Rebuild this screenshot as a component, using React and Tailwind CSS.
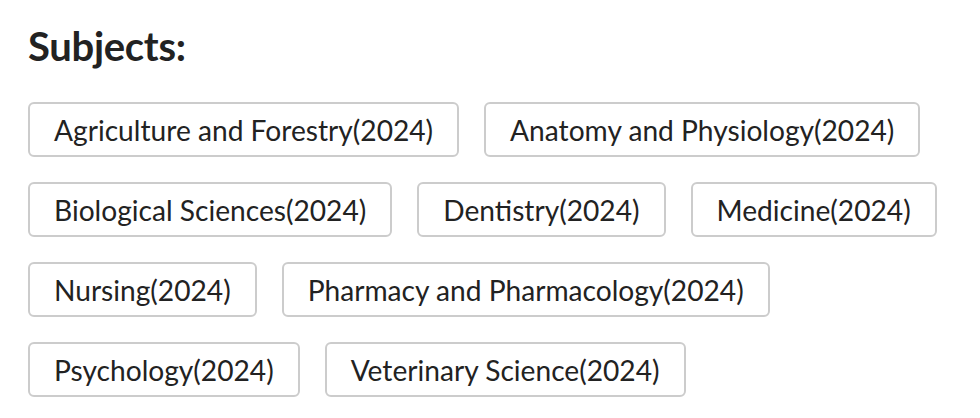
const subjects = [
  'Agriculture and Forestry(2024)',
  'Anatomy and Physiology(2024)',
  'Biological Sciences(2024)',
  'Dentistry(2024)',
  'Medicine(2024)',
  'Nursing(2024)',
  'Pharmacy and Pharmacology(2024)',
  'Psychology(2024)',
  'Veterinary Science(2024)'
];

export default function App() {
  return (
    <div className="min-h-screen bg-white px-[28px] pt-[22px] text-[#222]" style={{ fontFamily: 'Lato, sans-serif' }}>
      <h2 className="text-[40px] font-bold leading-[48px] tracking-[-0.3px]">Subjects:</h2>
      <div className="mt-[32px] flex flex-wrap gap-x-[25px] gap-y-[25px]">
        {subjects.map((subject) => (
          <button
            key={subject}
            type="button"
            className="h-[55px] rounded-[6px] border-2 border-[#cccccc] bg-white px-[24px] text-[28.15px] leading-[32px] text-[#222]"
          >
            {subject}
          </button>
        ))}
      </div>
    </div>
  );
}
